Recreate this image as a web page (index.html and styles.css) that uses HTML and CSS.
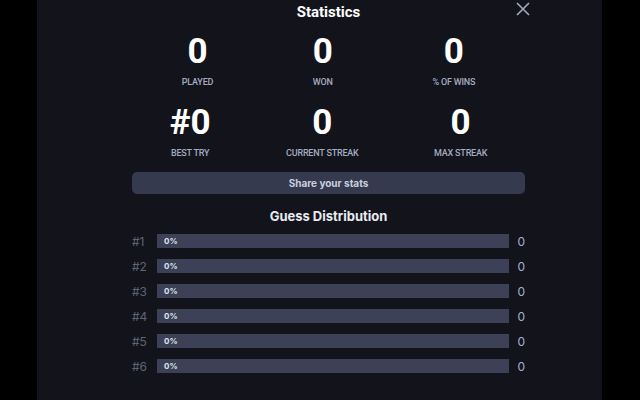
FILE: index.html
```html
<!DOCTYPE html>
<html lang="en">
<head>
    <meta charset="UTF-8">
    <meta name="viewport" content="width=device-width, initial-scale=1.0">
    <title>Statistics</title>
    <link rel="stylesheet" href="styles.css">
</head>
<body>
    <div class="modal">
        <button class="close-button" aria-label="Close">
            <svg width="14" height="14" viewBox="0 0 14 14">
                <path d="M1 1 L13 13 M13 1 L1 13" stroke="#a3aabd" stroke-width="1.6" fill="none"/>
            </svg>
        </button>

        <div class="content">
            <h1>Statistics</h1>

            <div class="stats-row">
                <div class="stat">
                    <span class="stat-value">0</span>
                    <span class="stat-label">PLAYED</span>
                </div>
                <div class="stat">
                    <span class="stat-value">0</span>
                    <span class="stat-label">WON</span>
                </div>
                <div class="stat">
                    <span class="stat-value">0</span>
                    <span class="stat-label">% OF WINS</span>
                </div>
            </div>

            <div class="stats-row">
                <div class="stat">
                    <span class="stat-value">#0</span>
                    <span class="stat-label">BEST TRY</span>
                </div>
                <div class="stat">
                    <span class="stat-value">0</span>
                    <span class="stat-label">CURRENT STREAK</span>
                </div>
                <div class="stat">
                    <span class="stat-value">0</span>
                    <span class="stat-label">MAX STREAK</span>
                </div>
            </div>

            <button class="share-button">Share your stats</button>

            <h2>Guess Distribution</h2>

            <div class="distribution">
                <div class="dist-row">
                    <span class="dist-try">#1</span>
                    <div class="dist-bar"><span>0%</span></div>
                    <span class="dist-count">0</span>
                </div>
                <div class="dist-row">
                    <span class="dist-try">#2</span>
                    <div class="dist-bar"><span>0%</span></div>
                    <span class="dist-count">0</span>
                </div>
                <div class="dist-row">
                    <span class="dist-try">#3</span>
                    <div class="dist-bar"><span>0%</span></div>
                    <span class="dist-count">0</span>
                </div>
                <div class="dist-row">
                    <span class="dist-try">#4</span>
                    <div class="dist-bar"><span>0%</span></div>
                    <span class="dist-count">0</span>
                </div>
                <div class="dist-row">
                    <span class="dist-try">#5</span>
                    <div class="dist-bar"><span>0%</span></div>
                    <span class="dist-count">0</span>
                </div>
                <div class="dist-row">
                    <span class="dist-try">#6</span>
                    <div class="dist-bar"><span>0%</span></div>
                    <span class="dist-count">0</span>
                </div>
            </div>
        </div>
    </div>
</body>
</html>
```

FILE: styles.css
```css
* {
    margin: 0;
    padding: 0;
    box-sizing: border-box;
}

body {
    background: #000;
    height: 400px;
    overflow: hidden;
    font-family: 'Roboto', 'Liberation Sans', sans-serif;
}

.modal {
    position: relative;
    width: 565px;
    height: 400px;
    margin-left: 37px;
    background: #13141b;
    padding-left: 95px;
}

.close-button {
    position: absolute;
    top: 2px;
    left: 479px;
    background: none;
    border: none;
    cursor: pointer;
    display: flex;
}

.content {
    width: 393px;
}

h1 {
    text-align: center;
    color: #fff;
    font-size: 15px;
    font-weight: 700;
    line-height: 24px;
}

.stats-row {
    display: flex;
    justify-content: space-around;
    margin-top: 7px;
}

.stats-row + .stats-row {
    margin-top: 14px;
}

.stat {
    display: flex;
    flex-direction: column;
    align-items: center;
}

.stat-value {
    color: #fff;
    font-size: 35px;
    font-weight: 700;
    line-height: 42px;
}

.stat-label {
    color: #a3abc2;
    font-size: 9px;
    font-weight: 500;
    line-height: 12px;
    margin-top: 3px;
    letter-spacing: -0.2px;
}

.share-button {
    display: block;
    width: 100%;
    height: 22px;
    margin-top: 13px;
    background: #353a4f;
    border: none;
    border-radius: 5px;
    color: #c9cfdf;
    font-family: 'Inter', sans-serif;
    font-size: 10px;
    font-weight: 700;
    cursor: pointer;
}

h2 {
    text-align: center;
    color: #e9ebf2;
    font-family: 'Inter', sans-serif;
    font-size: 13px;
    font-weight: 700;
    line-height: 20px;
    margin-top: 12px;
}

.distribution {
    display: flex;
    flex-direction: column;
    gap: 11px;
    margin-top: 8px;
}

.dist-row {
    display: flex;
    align-items: center;
    height: 14px;
}

.dist-try {
    width: 25px;
    color: #5e6479;
    font-family: 'Inter', sans-serif;
    font-size: 12px;
}

.dist-bar {
    width: 352px;
    height: 14px;
    background: #3d4157;
    display: flex;
    align-items: center;
    padding-left: 7px;
}

.dist-bar span {
    color: #dfe3ee;
    font-family: 'Inter', sans-serif;
    font-size: 8px;
    font-weight: 700;
}

.dist-count {
    margin-left: auto;
    color: #a6b2d0;
    font-family: 'Inter', sans-serif;
    font-size: 12px;
}
```
